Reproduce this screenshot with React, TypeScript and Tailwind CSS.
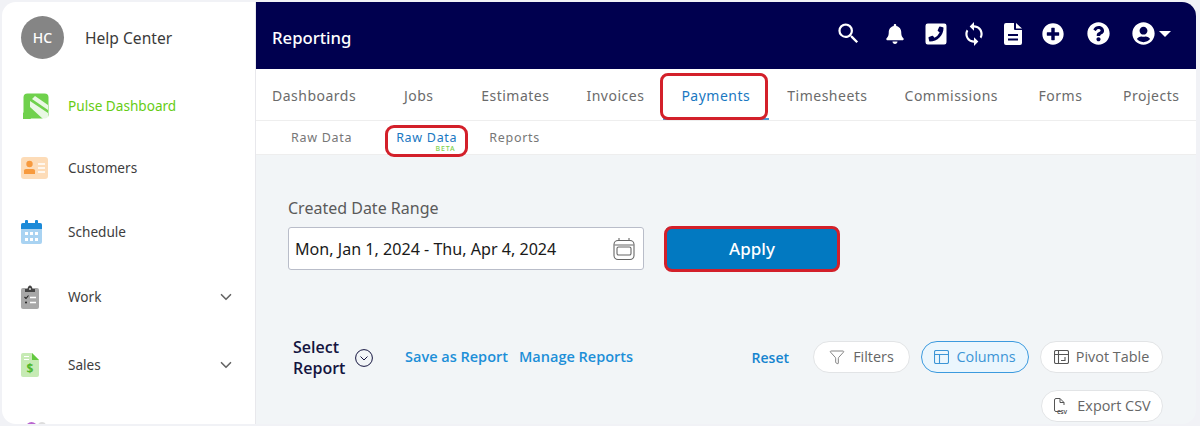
import { ChevronDown, Funnel } from "lucide-react";
import { MdSearch, MdSync } from "react-icons/md";
import { FaBell, FaPhoneSquareAlt, FaPlusCircle, FaQuestionCircle, FaUserCircle } from "react-icons/fa";

const tabs = ["Dashboards", "Jobs", "Estimates", "Invoices", "Payments", "Timesheets", "Commissions", "Forms", "Projects"];

function PulseIcon() {
  return (
    <svg className="ml-[2px]" width="26" height="26" viewBox="0 0 26 26">
      <rect width="25" height="25" x="0.5" y="0.5" rx="4" fill="#6fd14c" />
      <path d="M7 8 L25 20 V26 H20 L7 14 Z M12 3 L25 12 V17 L9 6 Z" fill="#fff" opacity="0.85" />
      <path d="M0 26 H8 L4 17 L0 20 Z" fill="#6fd14c" />
    </svg>
  );
}

function CustomersIcon() {
  return (
    <svg width="27" height="22" viewBox="0 0 27 22">
      <rect width="27" height="22" rx="3" fill="#fddcb8" />
      <circle cx="8.5" cy="7" r="3.2" fill="#f79a3e" />
      <path d="M3 17 V13.5 Q3 12 5 12 H12 Q14 12 14 13.5 V17 Z" fill="#f79a3e" />
      <path d="M17 7 H24 M17 11 H24 M17 15 H24" stroke="#fff" strokeWidth="1.6" />
    </svg>
  );
}

function ScheduleIcon() {
  return (
    <svg width="21" height="24" viewBox="0 0 21 24">
      <rect y="3" width="21" height="21" rx="2" fill="#a9d3f2" />
      <path d="M0 5 Q0 3 2 3 H19 Q21 3 21 5 V9 H0 Z" fill="#1b8ad8" />
      <rect x="4" y="0" width="3" height="5" rx="1" fill="#1b8ad8" />
      <rect x="14" y="0" width="3" height="5" rx="1" fill="#1b8ad8" />
      <path d="M4 12 H7 V15 H4 Z M9 12 H12 V15 H9 Z M14 12 H17 V15 H14 Z M4 18 H7 V21 H4 Z M9 18 H12 V21 H9 Z M14 18 H17 V21 H14 Z" fill="#fff" />
    </svg>
  );
}

function WorkIcon() {
  return (
    <svg width="18" height="24" viewBox="0 0 18 24">
      <rect y="3" width="18" height="21" rx="2" fill="#a8a8a8" />
      <path d="M4 7 V4 H6.5 Q7 0.5 9 0.5 Q11 0.5 11.5 4 H14 V7 Z" fill="#444" />
      <circle cx="9" cy="4" r="1" fill="#ddd" />
      <path d="M3.5 12 L5 13.5 L7.5 10.5" stroke="#222" strokeWidth="1.1" fill="none" />
      <path d="M9 12.5 H15 M9 17.5 H15" stroke="#fff" strokeWidth="1.5" />
      <circle cx="5" cy="17.5" r="1" fill="#222" />
    </svg>
  );
}

function SalesIcon() {
  return (
    <svg width="18" height="24" viewBox="0 0 18 24">
      <path d="M2 0 H11 L18 7 V22 Q18 24 16 24 H2 Q0 24 0 22 V2 Q0 0 2 0 Z" fill="#c6eab4" />
      <path d="M11 0 L18 7 H11 Z" fill="#63c93f" />
      <path d="M3 3.5 H8 M3 6.5 H8" stroke="#fff" strokeWidth="1.2" />
      <text x="9" y="20" textAnchor="middle" fontSize="12" fontWeight="700" fill="#4fb82c" fontFamily="'Noto Sans', sans-serif">$</text>
    </svg>
  );
}

function NavRow({ icon, label, className, green, chevron }: { icon: React.ReactNode; label: string; className: string; green?: boolean; chevron?: boolean }) {
  return (
    <div className={`flex items-center pl-[19px] pr-[20px] ${className}`}>
      <div className="flex w-[47px] shrink-0 items-center">{icon}</div>
      <span className={`text-[13.6px] ${green ? "text-[#66cc14]" : "text-[#3d3d3d]"}`}>{label}</span>
      {chevron && <ChevronDown className="ml-auto text-[#666]" size={18} strokeWidth={2.2} />}
    </div>
  );
}

function Pill({ label, icon, active, className = "" }: { label: string; icon: React.ReactNode; active?: boolean; className?: string }) {
  return (
    <div
      className={`flex h-[32px] items-center justify-center gap-[7px] rounded-full border text-[14.4px] ${
        active ? "border-[#3c9ade] bg-[#ebf6fd] text-[#3c95d6]" : "border-[#e2e4e6] bg-white text-[#666]"
      } ${className}`}
    >
      {icon}
      {label}
    </div>
  );
}

export default function App() {
  return (
    <div className="h-[426px] w-[1200px] overflow-hidden bg-[#f1f2f6] p-[2px] pr-[4px] font-['Noto_Sans',sans-serif]">
      <div className="flex h-[422px] overflow-hidden rounded-[14px]">
        <aside className="w-[253px] shrink-0 overflow-hidden bg-white">
          <div className="flex items-center pl-[19px] pt-[14px]">
            <div className="flex h-[43px] w-[43px] items-center justify-center rounded-full bg-[#858585] text-[14px] font-medium text-white">HC</div>
            <span className="ml-[21px] mt-[3px] text-[15.6px] text-[#3a3a3a]">Help Center</span>
          </div>
          <NavRow className="mt-[34px]" icon={<PulseIcon />} label="Pulse Dashboard" green />
          <NavRow className="mt-[38px]" icon={<CustomersIcon />} label="Customers" />
          <NavRow className="mt-[41px]" icon={<ScheduleIcon />} label="Schedule" />
          <NavRow className="mt-[41px]" icon={<WorkIcon />} label="Work" chevron />
          <NavRow className="mt-[44px]" icon={<SalesIcon />} label="Sales" chevron />
          <div className="ml-[24px] mt-[45px] flex">
            <div className="h-[12px] w-[11px] rounded-full bg-[#b966cf]" />
            <div className="ml-[1px] h-[12px] w-[8px] rounded-full bg-[#ddd]" />
          </div>
        </aside>

        <main className="relative min-w-0 flex-1 border-l border-[#e8e8ec] bg-[#f2f5f7]">
          <header className="flex h-[67px] items-center bg-[#00004f] pl-[16px] pr-[25px] text-white">
            <span className="mt-[5px] text-[16.7px] font-medium">Reporting</span>
            <div className="mb-[4px] ml-auto flex items-center">
              <MdSearch size={27} />
              <FaBell size={20} className="ml-[23px]" />
              <FaPhoneSquareAlt size={24} className="ml-[19px] -scale-x-100" />
              <MdSync size={26} className="ml-[13px]" />
              <svg className="ml-[17px]" width="18" height="22" viewBox="0 0 18 22" fill="white">
                <path d="M2 0 H10 V6 Q10 7 11 7 H18 V20 Q18 22 16 22 H2 Q0 22 0 20 V2 Q0 0 2 0 Z M12 0 L18 5.5 H12 Z" />
                <path d="M4 12 H14 M4 16.5 H14" stroke="#00004f" strokeWidth="1.8" />
              </svg>
              <FaPlusCircle size={22} className="ml-[20px]" />
              <FaQuestionCircle size={23} className="ml-[23px]" />
              <FaUserCircle size={23} className="ml-[22px]" />
              <div className="ml-[4px] h-0 w-0 border-x-[6px] border-t-[6px] border-x-transparent border-t-white" />
            </div>
          </header>

          <nav className="flex h-[52px] border-b border-[#eeeeee] bg-white">
            <div className="-ml-[2.5px] flex">
              {tabs.map((tab) => (
                <div
                  key={tab}
                  className={`flex min-w-[88px] items-center justify-center border-b-2 px-[18.5px] pt-[3px] text-[14px] tracking-[0.5px] ${
                    tab === "Payments" ? "border-[#4b9ad6] text-[#1a78c2]" : "border-transparent text-[#6b6b6b]"
                  }`}
                >
                  {tab}
                </div>
              ))}
            </div>
          </nav>

          <div className="flex h-[34px] items-center border-b border-[#eeeeee] bg-white pl-[35px] pt-[2px] text-[12.5px] tracking-[0.7px] text-[#777]">
            <span>Raw Data</span>
            <span className="relative ml-[44px] text-[#1a78c2]">
              Raw Data
              <span className="absolute -bottom-[4px] right-[2px] text-[7px] font-medium leading-none tracking-[0.8px] text-[#7fd14e]">BETA</span>
            </span>
            <span className="ml-[32px]">Reports</span>
          </div>

          <section className="pl-[32px] pr-[33px]">
            <div className="pt-[41px] text-[16px] leading-[24px] text-[#5a5a5a]">Created Date Range</div>
            <div className="mt-[7px] flex items-center">
              <div className="flex h-[43px] w-[356px] items-center rounded-[3px] border border-[#b9bdc9] bg-white pl-[6px] pr-[8px] pt-[1px] text-[16.1px] text-[#1a1a1a]">
                Mon, Jan 1, 2024 - Thu, Apr 4, 2024
                <svg className="ml-auto" width="22" height="24" viewBox="0 0 22 24" fill="none" stroke="#666" strokeWidth="1.1">
                  <rect x="1" y="3.5" width="20" height="19" rx="4" />
                  <rect x="4" y="10" width="14" height="8" rx="1.5" />
                  <path d="M1.5 8 H20.5 M6 1 V4 M16 1 V4" />
                </svg>
              </div>
              <button className="ml-[22px] h-[43px] w-[172px] rounded-[4px] bg-[#0279c1] text-[17px] font-medium text-white">Apply</button>
            </div>

            <div className="mt-[68px] flex items-start font-['Open_Sans',sans-serif]">
              <div className="ml-[5px] mt-[-1px] w-[58px] text-[16px] font-semibold leading-[21px] text-[#14143f]">Select Report</div>
              <svg className="ml-[4px] mt-[11px]" width="18" height="18" viewBox="0 0 18 18" fill="none" stroke="#14143f" strokeWidth="1">
                <circle cx="9" cy="9" r="8.4" />
                <path d="M5.5 7.5 L9 11 L12.5 7.5" />
              </svg>
              <span className="ml-[32px] mt-[9px] text-[14.5px] font-semibold leading-[20px] text-[#1d8fd8]">Save as Report</span>
              <span className="ml-[11px] mt-[9px] text-[14.5px] font-semibold leading-[20px] text-[#1d8fd8]">Manage Reports</span>
              <div className="ml-auto mt-[3px] flex w-[412px] flex-wrap items-center justify-end gap-x-[11px] gap-y-[17px]">
                <span className="mr-[13px] text-[14px] font-semibold text-[#1584cf]">Reset</span>
                <Pill
                  className="w-[97px]"
                  label="Filters"
                  icon={<Funnel size={16} strokeWidth={1.2} className="mr-[1px]" />}
                />
                <Pill
                  active
                  className="w-[108px]"
                  label="Columns"
                  icon={
                    <svg width="15" height="14" viewBox="0 0 15 14" fill="none" stroke="#3c95d6" strokeWidth="1.1">
                      <rect x="0.5" y="0.5" width="14" height="13" rx="1.5" />
                      <path d="M0.5 4.5 H14.5 M5.5 4.5 V13.5" />
                    </svg>
                  }
                />
                <Pill
                  className="w-[123px]"
                  label="Pivot Table"
                  icon={
                    <svg width="15" height="14" viewBox="0 0 15 14" fill="none" stroke="#555" strokeWidth="1.1">
                      <rect x="0.5" y="0.5" width="14" height="13" rx="1.5" />
                      <path d="M0.5 4.5 H14.5 M4.5 0.5 V13.5 M7 10.5 H11 V7" />
                    </svg>
                  }
                />
                <Pill
                  className="w-[122px]"
                  label="Export CSV"
                  icon={
                    <svg width="17" height="17" viewBox="0 0 17 17" fill="none" stroke="#555" strokeWidth="1">
                      <path d="M8 13.5 H3 Q1.5 13.5 1.5 12 V2 Q1.5 0.5 3 0.5 H7 L11 4.5 V7 M7 0.5 V4.5 H11" />
                      <text x="4" y="16" fontSize="5.5" fontWeight="700" fill="#555" stroke="none">CSV</text>
                    </svg>
                  }
                />
              </div>
            </div>
          </section>

          {/* red highlight boxes from the screenshot tool */}
          <div className="absolute left-[404px] top-[71px] h-[47px] w-[108px] rounded-[8px] border-[3px] border-[#d3202a]" />
          <div className="absolute left-[129px] top-[123px] h-[32px] w-[83px] rounded-[9px] border-[3px] border-[#d3202a]" />
          <div className="absolute left-[408px] top-[224px] h-[46px] w-[176px] rounded-[8px] border-[3px] border-[#d3202a]" />
        </main>
      </div>
    </div>
  );
}
